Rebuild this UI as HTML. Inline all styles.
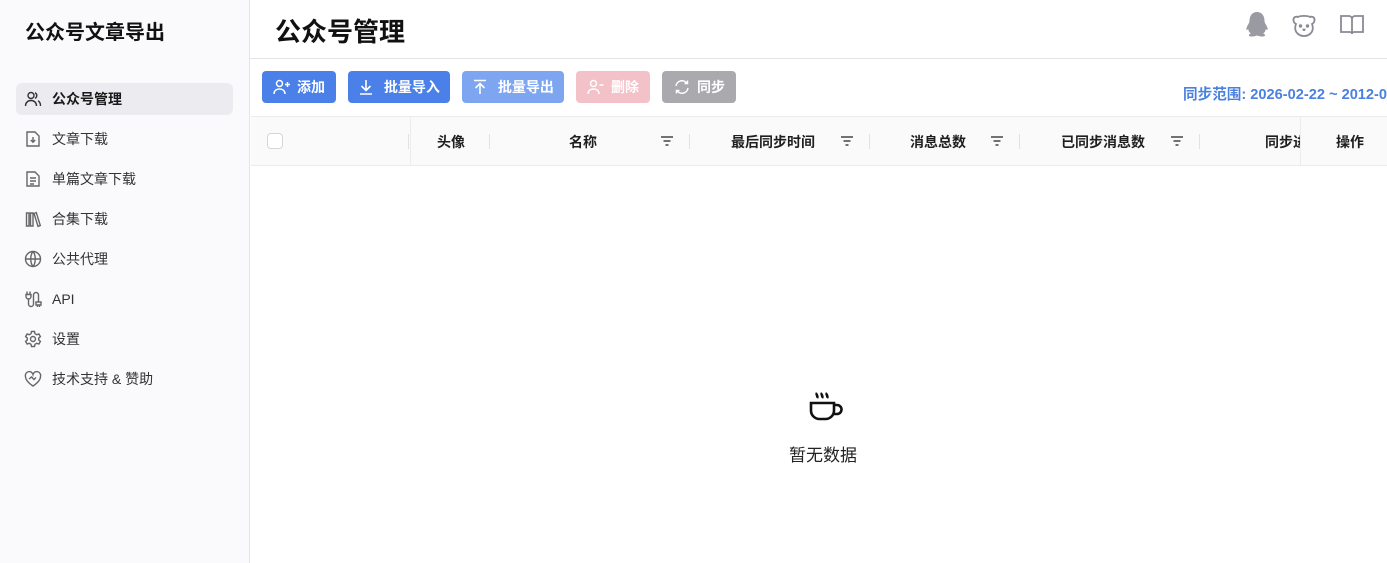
<!DOCTYPE html>
<html><head><meta charset="utf-8"><style>
*{box-sizing:border-box;margin:0;padding:0}
body{width:1387px;height:563px;overflow:hidden;font-family:"Liberation Sans","Noto Sans CJK SC",sans-serif;background:#fff;position:relative;color:#1f1f1f}
.side{position:absolute;left:0;top:0;width:250px;height:563px;background:#fafafc;border-right:1px solid #e4e4e7}
.logo{position:absolute;left:25px;top:16px;font-size:20px;font-weight:bold;color:#111}
.item{position:absolute;left:16px;width:217px;height:32px;border-radius:6px;font-size:14px;color:#333;display:flex;align-items:center}
.item svg{position:absolute;left:8px;top:7px}
.item span{position:absolute;left:36px}
.item.act{background:#ececf0;font-weight:bold;color:#1a1a1a}
.hdr{position:absolute;left:250px;top:0;right:0;height:59px;border-bottom:1px solid #e4e4e7}
.title{position:absolute;left:25px;top:12px;font-size:26px;font-weight:bold;color:#111}
.btn{position:absolute;top:71px;height:32px;border-radius:4px;color:#fff;font-size:14px;font-weight:bold;display:flex;align-items:center;justify-content:center;gap:6px}
.range{position:absolute;left:1183px;top:83px;font-size:14.6px;color:#4a80e0;white-space:nowrap;font-weight:bold}
.thead{position:absolute;left:251px;top:116px;right:0;height:50px;background:#fafafa;border-top:1px solid #ececec;border-bottom:1px solid #ececec;font-size:14px;font-weight:bold}
.th{position:absolute;top:15px}
.sep{position:absolute;top:17px;width:1px;height:15px;background:#e2e2e2}
.vl{position:absolute;top:0;width:1px;height:48px;background:#ececec}
.flt{position:absolute;top:18px}
</style></head><body>
<div class="side">
<div class="logo">公众号文章导出</div>
<div class="item act" style="top:83px"><svg width="18" height="18" viewBox="0 0 18 18" fill="none" stroke="#333" stroke-width="1.4"><circle cx="7" cy="5.5" r="3"/><path d="M1.5 16c0-3.5 2.5-5.5 5.5-5.5s5.5 2 5.5 5.5M11 2.8a3 3 0 0 1 0 5.5M14 10.8c1.5.8 2.5 2.5 2.5 5.2"/></svg><span>公众号管理</span></div>
<div class="item" style="top:123px"><svg width="18" height="18" viewBox="0 0 18 18" fill="none" stroke="#666" stroke-width="1.4"><path d="M3 2h8l4 4v10H3z"/><path d="M9 7v5M6.8 10L9 12.2 11.2 10"/></svg><span>文章下载</span></div>
<div class="item" style="top:163px"><svg width="18" height="18" viewBox="0 0 18 18" fill="none" stroke="#666" stroke-width="1.4"><path d="M3 2h8l4 4v10H3z"/><path d="M6 8h6M6 11h6M6 14h4"/></svg><span>单篇文章下载</span></div>
<div class="item" style="top:203px"><svg width="18" height="18" viewBox="0 0 18 18" fill="none" stroke="#666" stroke-width="1.4"><path d="M2.5 3h2.5v13H2.5zM6.5 3H9v13H6.5zM10 3.5l2.3-.8 4 12.8-2.3.8z"/></svg><span>合集下载</span></div>
<div class="item" style="top:243px"><svg width="18" height="18" viewBox="0 0 18 18" fill="none" stroke="#666" stroke-width="1.4"><circle cx="9" cy="9" r="7.5"/><path d="M1.5 9h15M9 1.5c-3 3.5-3 11.5 0 15M9 1.5c3 3.5 3 11.5 0 15"/></svg><span>公共代理</span></div>
<div class="item" style="top:283px"><svg width="18" height="18" viewBox="0 0 18 18" fill="none" stroke="#666" stroke-width="1.4"><path d="M3 1.5v3M6 1.5v3M2 4.5h5v2a2.5 2.5 0 0 1-5 0zM4.5 9v5a2.5 2.5 0 0 0 5 0V5a2.5 2.5 0 0 1 5 0v7M12 12h5v3h-5zM13.5 15v2M15.5 15v2"/></svg><span>API</span></div>
<div class="item" style="top:323px"><svg width="18" height="18" viewBox="0 0 18 18" fill="none" stroke="#666" stroke-width="1.4"><circle cx="9" cy="9" r="2.5"/><path d="M7.5 1.5h3l.5 2.2 1.8 1 2.1-.7 1.5 2.6-1.7 1.5v1.8l1.7 1.5-1.5 2.6-2.1-.7-1.8 1-.5 2.2h-3l-.5-2.2-1.8-1-2.1.7-1.5-2.6 1.7-1.5V8.1L1.6 6.6l1.5-2.6 2.1.7 1.8-1z"/></svg><span>设置</span></div>
<div class="item" style="top:363px"><svg width="18" height="18" viewBox="0 0 18 18" fill="none" stroke="#666" stroke-width="1.4"><path d="M9 16S1.5 11.5 1.5 6.5A3.8 3.8 0 0 1 9 4.5a3.8 3.8 0 0 1 7.5 2C16.5 11.5 9 16 9 16z"/><path d="M5 9l2.5-2 2.5 2.5 2-2"/></svg><span>技术支持 &amp; 赞助</span></div>
</div>
<div class="hdr"><div class="title">公众号管理</div>
<svg style="position:absolute;left:994px;top:11px" width="26" height="28" viewBox="0 0 26 28"><path fill="#9a9aa2" d="M13 1c-5 0-7.5 4-7.5 9 0 2-2 4-3 7-.6 2 .4 2.5 1.8 1 0 2 1 3.5 2.5 4.5-2 .8-2.5 2-1 2.8 2.2.7 5-.2 7.2-.8 2.2.6 5 1.5 7.2.8 1.5-.8 1-2-1-2.8 1.5-1 2.5-2.5 2.5-4.5 1.4 1.5 2.4 1 1.8-1-1-3-3-5-3-7 0-5-2.5-9-7.5-9z"/></svg>
<svg style="position:absolute;left:1041px;top:12px" width="26" height="26" viewBox="0 0 26 26" fill="none" stroke="#8a8a92" stroke-width="1.8"><path d="M7 5c2-1.5 10-1.5 12 0 2.5-1 5 .5 4.5 3.5-.3 2-1.5 3-2.5 3.5.5 1 .8 2.5.8 4C21.8 21 17.5 24 13 24S4.2 21 4.2 16c0-1.5.3-3 .8-4-1-.5-2.2-1.5-2.5-3.5C2 5.5 4.5 4 7 5z"/><circle cx="9.5" cy="14" r=".8" fill="#8a8a92"/><circle cx="16.5" cy="14" r=".8" fill="#8a8a92"/><path d="M11.5 17.5h3M13 17.5v1.5"/></svg>
<svg style="position:absolute;left:1089px;top:12px" width="26" height="26" viewBox="0 0 26 26" fill="none" stroke="#8a8a92" stroke-width="1.8"><path d="M2 4h8a3 3 0 0 1 3 3v15a2 2 0 0 0-2-2H2zM24 4h-8a3 3 0 0 0-3 3v15a2 2 0 0 1 2-2h9z"/></svg>
</div>
<div class="btn" style="left:262px;width:74px;background:#4a80e8"><svg width="18" height="16" viewBox="0 0 18 16" fill="none" stroke="#fff" stroke-width="1.5"><circle cx="6.5" cy="4.5" r="3"/><path d="M1 15c0-3.5 2.5-5 5.5-5s5.5 1.5 5.5 5M14.5 3v5M12 5.5h5"/></svg>添加</div>
<div class="btn" style="left:348px;width:102px;background:#4a80e8"><svg width="16" height="16" viewBox="0 0 16 16" fill="none" stroke="#fff" stroke-width="1.6"><path d="M8 1v10M3.5 7L8 11.5 12.5 7M2 15h12"/></svg>&nbsp;批量导入</div>
<div class="btn" style="left:462px;width:102px;background:#7ea6f0"><svg width="16" height="16" viewBox="0 0 16 16" fill="none" stroke="#fff" stroke-width="1.6"><path d="M8 15V5M3.5 9L8 4.5 12.5 9M2 1.5h12"/></svg>&nbsp;批量导出</div>
<div class="btn" style="left:576px;width:74px;background:#f3c1c8"><svg width="18" height="16" viewBox="0 0 18 16" fill="none" stroke="#fff" stroke-width="1.5"><circle cx="6.5" cy="4.5" r="3"/><path d="M1 15c0-3.5 2.5-5 5.5-5s5.5 1.5 5.5 5M12.5 6h4"/></svg>删除</div>
<div class="btn" style="left:662px;width:74px;background:#a9a9ae"><svg width="18" height="16" viewBox="0 0 18 16" fill="none" stroke="#fff" stroke-width="1.5"><path d="M3 7a6 6 0 0 1 11-2.5M14.5 1.5v3h-3M15 9a6 6 0 0 1-11 2.5M3.5 14.5v-3h3"/></svg>同步</div>
<div class="range">同步范围: 2026-02-22 ~ 2012-0</div>
<div class="thead">
<div style="position:absolute;left:16px;top:16px;width:16px;height:16px;border:1px solid #d6d6d6;border-radius:4px;background:#fff"></div>
<div class="sep" style="left:157px"></div><div class="vl" style="left:159px"></div>
<div class="th" style="left:186px">头像</div><div class="sep" style="left:238px"></div>
<div class="th" style="left:318px">名称</div>
<svg class="flt" style="left:409px" width="14" height="12" viewBox="0 0 14 12" stroke="#444" stroke-width="1.6"><path d="M1 2h12M3.5 6h7M5.5 10h3"/></svg><div class="sep" style="left:438px"></div>
<div class="th" style="left:480px">最后同步时间</div>
<svg class="flt" style="left:589px" width="14" height="12" viewBox="0 0 14 12" stroke="#444" stroke-width="1.6"><path d="M1 2h12M3.5 6h7M5.5 10h3"/></svg><div class="sep" style="left:618px"></div>
<div class="th" style="left:659px">消息总数</div>
<svg class="flt" style="left:739px" width="14" height="12" viewBox="0 0 14 12" stroke="#444" stroke-width="1.6"><path d="M1 2h12M3.5 6h7M5.5 10h3"/></svg><div class="sep" style="left:768px"></div>
<div class="th" style="left:810px">已同步消息数</div>
<svg class="flt" style="left:919px" width="14" height="12" viewBox="0 0 14 12" stroke="#444" stroke-width="1.6"><path d="M1 2h12M3.5 6h7M5.5 10h3"/></svg><div class="sep" style="left:948px"></div>
<div class="th" style="left:1014px;width:35px;overflow:hidden;white-space:nowrap">同步进度</div>
<div class="vl" style="left:1049px"></div>
<div class="th" style="left:1085px">操作</div>
</div>
<svg style="position:absolute;left:808px;top:391px" width="36" height="36" viewBox="0 0 36 36" fill="none" stroke="#111" stroke-width="2.6"><path d="M9 2c-1.5 1.5 1.5 3 0 5M14 2c-1.5 1.5 1.5 3 0 5M19 2c-1.5 1.5 1.5 3 0 5"/><path d="M3 12h23v7.5a8.5 8.5 0 0 1-8.5 8.5h-6A8.5 8.5 0 0 1 3 19.5z"/><path d="M26 14h3a4.5 4.5 0 0 1 0 9h-4"/></svg>
<div style="position:absolute;left:789px;top:441px;font-size:17px;color:#222">暂无数据</div>
</body></html>
